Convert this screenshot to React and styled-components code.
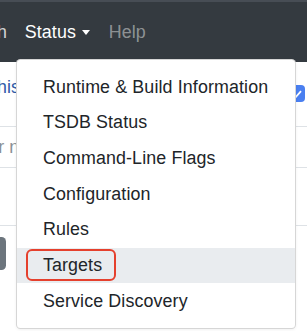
import React from 'react';
import styled, { createGlobalStyle } from 'styled-components';

const GlobalStyle = createGlobalStyle`
  html, body {
    margin: 0;
    padding: 0;
    background: #fff;
    overflow: hidden;
  }
  body {
    font-family: "Liberation Sans", Arial, sans-serif;
    font-size: 17.85px;
    line-height: 1.5;
    color: #212529;
  }
`

const Page = styled.div`
  width: 307px;
  height: 331px;
  position: relative;
  overflow: hidden;
`

const Navbar = styled.nav`
  height: 62px;
  box-sizing: border-box;
  background: #343a40;
  border-top: 2px solid #474d55;
  display: flex;
  align-items: center;
  margin-left: -52px;
  position: relative;
  z-index: 2;
`

const NavItem = styled.div`
  position: relative;
`

const NavLink = styled.a`
  display: flex;
  align-items: center;
  padding: 8.9px;
  text-decoration: none;
  font-size: 17.85px;
  line-height: 26.8px;
  letter-spacing: 0.1px;
  color: ${p => (p.$active ? '#fff' : p.$dim ? 'rgba(255,255,255,0.45)' : 'rgba(255,255,255,0.78)')};
`

const Caret = styled.span`
  display: inline-block;
  margin-left: 6px;
  margin-right: 1px;
  margin-top: 1px;
  border-top: 5px solid #fff;
  border-left: 4.8px solid transparent;
  border-right: 4.8px solid transparent;
`

const Menu = styled.div`
  position: absolute;
  top: calc(100% + 5px);
  left: 0;
  width: 280px;
  box-sizing: border-box;
  padding: 8.9px 0;
  background: #fff;
  border: 1px solid rgba(0, 0, 0, 0.16);
  border-radius: 4.5px;
  box-shadow: 0 1px 3px rgba(0, 0, 0, 0.06);
`

const MenuItem = styled.a`
  display: block;
  position: relative;
  padding: 4.45px 26px;
  line-height: 26.8px;
  font-size: 17.85px;
  letter-spacing: 0.12px;
  color: #212529;
  white-space: nowrap;
  text-decoration: none;
  background: ${p => (p.$hover ? '#e9ecef' : 'transparent')};
`

const Mark = styled.span`
  position: absolute;
  top: 1px;
  left: 9px;
  width: 90px;
  height: 32px;
  box-sizing: border-box;
  border: 2px solid #e5402d;
  border-radius: 6px;
`

const Content = styled.main`
  display: flex;
  flex-direction: column;
`

const Row = styled.div`
  display: flex;
  justify-content: space-between;
  align-items: flex-start;
  height: ${p => p.$h}px;
  box-sizing: border-box;
  padding-top: ${p => p.$pt || 0}px;
  border-bottom: ${p => (p.$line ? '1px solid #dee2e6' : 'none')};
`

const LinkText = styled.a`
  margin-left: -113px;
  color: #2f5ba8;
  white-space: nowrap;
  line-height: 26.8px;
  text-decoration: none;
`

const Placeholder = styled.span`
  margin-left: -258px;
  color: #8a9096;
  white-space: nowrap;
  line-height: 26.8px;
`

const Check = styled.span`
  width: 17px;
  height: 17px;
  margin: 11px 2px 0 0;
  border-radius: 4px;
  background: #4a7ff0;
  display: flex;
  align-items: center;
  justify-content: center;
`

const GreyButton = styled.button`
  margin-left: -54px;
  width: 60px;
  height: 33px;
  border: none;
  border-radius: 4.5px;
  background: #6c757d;
`

const menuItems = [
  'Runtime & Build Information',
  'TSDB Status',
  'Command-Line Flags',
  'Configuration',
  'Rules',
  'Targets',
  'Service Discovery',
];

const App = () => {
  return (
    <Page>
      <GlobalStyle />
      <Navbar>
        <NavLink href="#">Graph</NavLink>
        <NavItem>
          <NavLink href="#" $active>
            Status<Caret />
          </NavLink>
          <Menu>
            {menuItems.map(item => (
              <MenuItem href="#" key={item} $hover={item === 'Targets'}>
                {item}
                {item === 'Targets' && <Mark />}
              </MenuItem>
            ))}
          </Menu>
        </NavItem>
        <NavLink href="#" $dim>Help</NavLink>
      </Navbar>
      <Content>
        <Row $h={65} $pt={12} $line>
          <LinkText href="#">Enable query history</LinkText>
          <Check>
            <svg width="10" height="8" viewBox="0 0 10 8">
              <path d="M1 4.2 L3.8 7 L9 1.2" fill="none" stroke="#fff" strokeWidth="1.8" />
            </svg>
          </Check>
        </Row>
        <Row $h={41} $pt={7} $line>
          <Placeholder>Expression (press Shift+Enter for newlines)</Placeholder>
        </Row>
        <Row $h={58} $line />
        <Row $h={60} $pt={11}>
          <GreyButton />
        </Row>
      </Content>
    </Page>
  );
}

export default App;
